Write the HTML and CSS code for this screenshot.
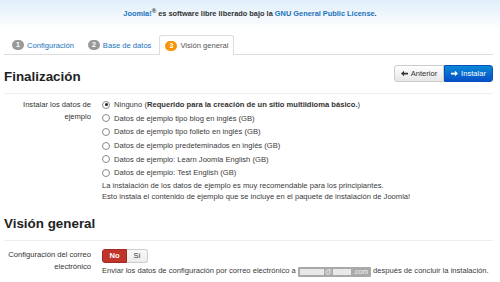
FILE: index.html
```html
<!DOCTYPE html>
<html lang="es">
<head>
<meta charset="utf-8">
<link rel="stylesheet" href="styles.css">
</head>
<body>
<div class="banner"><a class="lnk" href="#">Joomla!</a><sup>®</sup> es software libre liberado bajo la <a class="lnk" href="#">GNU General Public License</a>.</div>
<div class="page">
  <ul class="tabs">
    <li class="tab"><span class="badge">1</span><a href="#" class="tab-link">Configuración</a></li>
    <li class="tab"><span class="badge">2</span><a href="#" class="tab-link">Base de datos</a></li>
    <li class="tab active"><span class="badge orange">3</span><span class="tab-link">Visión general</span></li>
  </ul>

  <div class="section-head">
    <h3 class="title">Finalización</h3>
    <div class="btn-group">
      <a href="#" class="btn btn-default"><svg class="ico" viewBox="0 0 8 8" width="7" height="7"><path d="M0 4 L3.5 0.8 V3 H8 V5 H3.5 V7.2 Z" fill="#333"/></svg>Anterior</a>
      <a href="#" class="btn btn-primary"><svg class="ico" viewBox="0 0 8 8" width="7" height="7"><path d="M8 4 L4.5 0.8 V3 H0 V5 H4.5 V7.2 Z" fill="#fff"/></svg>Instalar</a>
    </div>
  </div>
  <div class="rule"></div>

  <div class="form-row first">
    <div class="label">Instalar los datos de ejemplo</div>
    <div class="controls">
      <label class="radio"><span class="rb checked"></span>Ninguno (<b>Requerido para la creación de un sitio multiidioma básico.</b>)</label>
      <label class="radio"><span class="rb"></span>Datos de ejemplo tipo blog en inglés (GB)</label>
      <label class="radio"><span class="rb"></span>Datos de ejemplo tipo folleto en inglés (GB)</label>
      <label class="radio"><span class="rb"></span>Datos de ejemplo predeteminados en inglés (GB)</label>
      <label class="radio"><span class="rb"></span>Datos de ejemplo: Learn Joomla English (GB)</label>
      <label class="radio"><span class="rb"></span>Datos de ejemplo: Test English (GB)</label>
      <p class="help">La instalación de los datos de ejemplo es muy recomendable para los principiantes.<br>Esto instala el contenido de ejemplo que se incluye en el paquete de instalación de Joomla!</p>
    </div>
  </div>

  <h3 class="title second">Visión general</h3>
  <div class="rule rule2"></div>

  <div class="form-row second-row">
    <div class="label">Configuración del correo electrónico</div>
    <div class="controls">
      <div class="toggle"><span class="tg no">No</span><span class="tg si">Sí</span></div>
      <p class="help nowrap mail-help">Enviar los datos de configuración por correo electrónico a <span class="mail"><span class="m1"></span><span class="at">@</span><span class="m2"></span><span class="dom">.com</span></span> después de concluir la instalación.</p>
    </div>
  </div>
</div>
</body>
</html>
```

FILE: styles.css
```css
* { box-sizing: border-box; }
body {
  margin: 0;
  font-family: "Liberation Sans", Arial, sans-serif;
  font-size: 7.6px;
  line-height: 11px;
  color: #3a3a3a;
  background: #fff;
}
a { text-decoration: none; }
.banner {
  height: 30px;
  padding-top: 8px;
  text-align: center;
  font-size: 7.4px;
  font-weight: bold;
  color: #333;
  background: linear-gradient(#e0eefa, #ffffff);
}
.banner sup { font-size: 6px; line-height: 0; vertical-align: 3px; }
.lnk { color: #1a72bb; }
.page { padding: 0 7px 0 4px; }
.tabs {
  display: flex;
  list-style: none;
  margin: 5px 0 0;
  padding: 0 0 0 2px;
  border-bottom: 1px solid #ddd;
}
.tab {
  display: flex;
  align-items: center;
  gap: 3px;
  height: 19px;
  padding: 0 5px;
  margin-right: 2px;
  margin-bottom: -1px;
  border: 1px solid transparent;
  border-bottom: 0;
  border-radius: 3px 3px 0 0;
}
.tab.active {
  height: 20px;
  border-color: #ddd;
  background: #fff;
}
.badge {
  width: 12px;
  height: 10px;
  border-radius: 5px;
  background: #999;
  color: #fff;
  font-size: 7px;
  line-height: 10px;
  font-weight: bold;
  text-align: center;
}
.badge.orange { background: #f89406; }
.tab-link { color: #1a72bb; }
.tab.active .tab-link { color: #555; }

.section-head {
  display: flex;
  justify-content: space-between;
  align-items: flex-start;
  margin-top: 10px;
}
.title {
  margin: 0;
  font-size: 13.4px;
  line-height: 18px;
  font-weight: bold;
  color: #222;
}
.section-head .title { margin-top: 3px; }
.btn-group { display: flex; }
.btn {
  display: flex;
  align-items: center;
  justify-content: center;
  gap: 3px;
  height: 17px;
  font-size: 7.6px;
}
.btn-default {
  width: 50px;
  color: #333;
  border: 1px solid #ccc;
  border-radius: 3px 0 0 3px;
  background: linear-gradient(#ffffff, #e6e6e6);
}
.btn-primary {
  width: 49px;
  color: #fff;
  border: 1px solid #0a4fc0;
  border-radius: 0 3px 3px 0;
  background: linear-gradient(#0a88d6, #0550c8);
}
.ico { display: block; }
.rule {
  height: 1px;
  background: #eee;
  margin-top: 7px;
}
.rule.rule2 { margin-top: 6px; }
.form-row { display: flex; }
.form-row.first { margin-top: 4px; }
.label {
  width: 87px;
  flex: none;
  text-align: right;
  line-height: 12px;
  color: #333;
  padding-top: 1px;
}
.controls { margin-left: 11px; }
.radio {
  display: flex;
  align-items: center;
  height: 13.6px;
}
.rb {
  width: 8px;
  height: 8px;
  border: 1px solid #8a8a8a;
  border-radius: 50%;
  margin-right: 4px;
  background: #fff;
  position: relative;
}
.rb.checked::after {
  content: "";
  position: absolute;
  left: 1.5px;
  top: 1.5px;
  width: 3px;
  height: 3px;
  border-radius: 50%;
  background: #222;
}
.radio b { color: #333; }
.help { margin: 0; }
.nowrap { white-space: nowrap; }
.mail-help { margin-top: 2px; }
.title.second { margin-top: 12px; line-height: 20px; }
.form-row.second-row { margin-top: 8px; }
.second-row .label { padding-top: 0; }
.toggle { display: flex; height: 14px; }
.tg {
  display: flex;
  align-items: center;
  justify-content: center;
  font-size: 7.6px;
}
.tg.no {
  width: 25px;
  background: #c0342c;
  color: #fff;
  font-weight: bold;
  border: 1px solid #a12a23;
  border-radius: 3px 0 0 3px;
}
.tg.si {
  width: 21px;
  background: linear-gradient(#fafafa, #ececec);
  color: #333;
  border: 1px solid #ccc;
  border-left: 0;
  border-radius: 0 3px 3px 0;
}
.mail {
  display: inline-flex;
  align-items: center;
  vertical-align: -2px;
  width: 73px;
  height: 10px;
  padding: 0 2px;
  gap: 1px;
  background: #a9a9a9;
  border-radius: 1px;
  color: #f4f4f4;
  font-size: 7px;
}
.m1 { width: 24px; height: 6px; background: #e9e9e9; }
.at { color: #eee; }
.m2 { width: 18px; height: 6px; background: #e9e9e9; }
.dom { margin-left: 1px; }
```
